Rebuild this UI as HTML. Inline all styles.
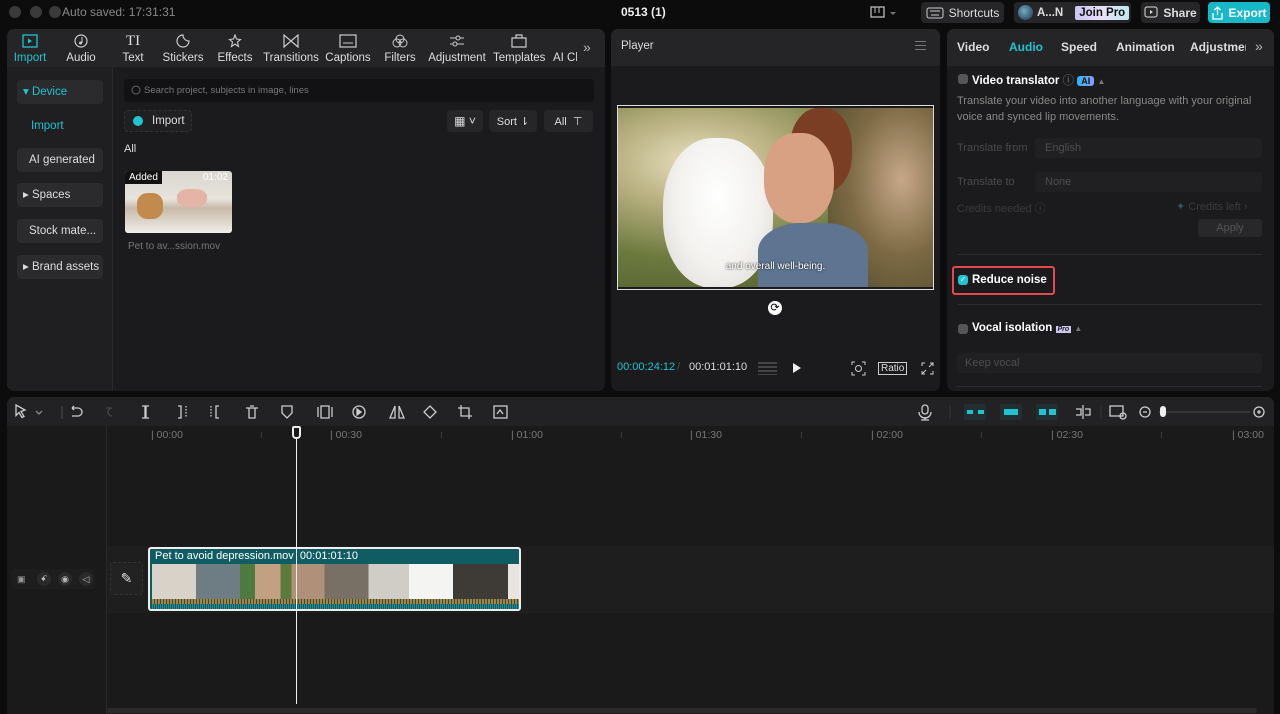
<!DOCTYPE html>
<html><head><meta charset="utf-8"><style>
*{box-sizing:border-box;margin:0;padding:0}
body{width:1280px;height:714px;background:#0c0c0c;font-family:"Liberation Sans",sans-serif;color:#ddd;position:relative;overflow:hidden;font-size:12px}
.a{position:absolute}
.panel{position:absolute;background:#1d1d1f;border-radius:7px;overflow:hidden}
.dot{width:12px;height:12px;border-radius:50%;background:#3a3a3a;top:6px}
.btn{position:absolute;background:#262628;border-radius:4px;color:#ddd;font-size:12px;display:flex;align-items:center;justify-content:center;white-space:nowrap}
.tab{position:absolute;top:5px;text-align:center;font-size:11.5px;color:#ddd;white-space:nowrap}
.tab svg{display:block;margin:0 auto 4px}
.side{position:absolute;left:10px;width:86px;height:24px;border-radius:4px;background:#2b2b2d;font-size:11.5px;color:#ddd;padding-left:6px;line-height:24px;white-space:nowrap;overflow:hidden}
.rt{position:absolute;font-size:10.5px;color:#777}
</style></head><body>
<div class="a dot" style="left:9px"></div><div class="a dot" style="left:30px"></div><div class="a dot" style="left:49px"></div>
<div class="a" style="left:62px;top:5px;color:#888;font-size:12px">Auto saved: 17:31:31</div>
<div class="a" style="left:621px;top:5px;color:#eee;font-size:12px;font-weight:bold">0513 (1)</div>
<svg class="a" style="left:870px;top:6px" width="28" height="14"><rect x="1" y="1" width="13" height="10" fill="none" stroke="#bbb" stroke-width="1.3"/><path d="M5 1v6M9 1v6" stroke="#bbb"/><path d="M20 6l3 3 3-3" fill="#777"/></svg>
<div class="btn" style="left:921px;top:2px;width:83px;height:21px;gap:5px"><svg width="18" height="12"><rect x="1" y="1" width="16" height="10" rx="2" fill="none" stroke="#ccc"/><path d="M4 4h10M5 8h8" stroke="#ccc"/></svg>Shortcuts</div>
<div class="btn" style="left:1014px;top:2px;width:117px;height:21px;justify-content:flex-start;padding-left:4px;gap:4px"><div style="width:15px;height:15px;border-radius:50%;background:radial-gradient(circle at 40% 40%,#7ab 0,#357 70%)"></div><b style="font-size:11.5px">A...N</b><span style="margin-left:8px;background:linear-gradient(90deg,#c9c4f4,#e9e1f6,#bfe9ee);color:#111;font-weight:bold;padding:1px 4px;border-radius:2px;font-size:11.5px">Join Pro</span></div>
<div class="btn" style="left:1141px;top:2px;width:59px;height:21px;gap:4px;font-weight:bold"><svg width="15" height="13"><rect x="1" y="1" width="12" height="10" rx="2" fill="none" stroke="#ddd"/><path d="M6 4l3 2-3 2z" fill="#ddd"/></svg>Share</div>
<div class="btn" style="left:1208px;top:2px;width:62px;height:21px;gap:4px;background:#17b8c8;color:#fff;font-weight:bold"><svg width="13" height="14"><path d="M6.5 1v8M3.5 4l3-3 3 3M2 7v6h9V7" fill="none" stroke="#fff" stroke-width="1.3"/></svg>Export</div>

<div class="panel" style="left:7px;top:29px;width:598px;height:362px;background:#1b1b1d">
 <div class="a" style="left:0;top:0;width:598px;height:38px;background:#252527"></div>
 <div class="a" style="left:0;top:38px;width:106px;height:324px;background:#1f1f21;border-right:1px solid #2a2a2a"></div>
 <div class="tab" style="left:5px;width:36px;color:#1fc3d2"><svg width="16" height="14"><rect x="1" y="1" width="14" height="12" fill="none" stroke="#1fc3d2" stroke-width="1.3"/><path d="M6 4.5l4 2.5-4 2.5z" fill="#1fc3d2"/></svg>Import</div>
 <div class="tab" style="left:58px;width:32px"><svg width="14" height="14"><circle cx="7" cy="7" r="6" fill="none" stroke="#ccc" stroke-width="1.2"/><path d="M8 3v6" stroke="#ccc"/><circle cx="6.5" cy="9" r="1.5" fill="#ccc"/></svg>Audio</div>
 <div class="tab" style="left:112px;width:28px"><div style="font-family:'Liberation Serif',serif;font-size:15px;line-height:14px;margin-bottom:4px">TI</div>Text</div>
 <div class="tab" style="left:154px;width:44px"><svg width="14" height="14"><path d="M7 1a6 6 0 1 0 6 6 6 6 0 0 1-6-6z" fill="none" stroke="#ccc" stroke-width="1.2"/></svg>Stickers</div>
 <div class="tab" style="left:208px;width:40px"><svg width="14" height="14"><path d="M7 1l1.5 4 4 .5-3 2.5 1 4.5L7 10l-3.5 2.5 1-4.5-3-2.5 4-.5z" fill="none" stroke="#ccc" stroke-width="1.1"/></svg>Effects</div>
 <div class="tab" style="left:256px;width:56px"><svg width="16" height="14"><path d="M1 1v12l14-12v12z" fill="none" stroke="#ccc" stroke-width="1.2"/></svg>Transitions</div>
 <div class="tab" style="left:318px;width:46px"><svg width="18" height="14"><rect x="1" y="1" width="16" height="12" fill="none" stroke="#ccc" stroke-width="1.2"/><path d="M4 9h10" stroke="#ccc"/></svg>Captions</div>
 <div class="tab" style="left:376px;width:34px"><svg width="16" height="14"><circle cx="8" cy="5" r="4" fill="none" stroke="#ccc"/><circle cx="5" cy="9" r="4" fill="none" stroke="#ccc"/><circle cx="11" cy="9" r="4" fill="none" stroke="#ccc"/></svg>Filters</div>
 <div class="tab" style="left:421px;width:58px"><svg width="16" height="14"><path d="M1 4h14M1 10h14" stroke="#ccc"/><circle cx="9" cy="4" r="2" fill="#252527" stroke="#ccc"/><circle cx="6" cy="10" r="2" fill="#252527" stroke="#ccc"/></svg>Adjustment</div>
 <div class="tab" style="left:486px;width:52px"><svg width="16" height="14"><path d="M1 4h14v9H1z M5 4V1h6v3" fill="none" stroke="#ccc" stroke-width="1.2"/></svg>Templates</div>
 <div class="tab" style="left:546px;width:24px;overflow:hidden;text-align:left"><div style="height:18px"></div>AI Cl</div>
 <div class="a" style="left:576px;top:10px;color:#bbb;font-size:14px">»</div>
 <div class="side" style="top:51px;color:#1fc3d2">▾ Device</div>
 <div class="a" style="left:24px;top:91px;color:#1fc3d2;font-size:11.5px">Import</div>
 <div class="side" style="top:119px;padding-left:12px">AI generated</div>
 <div class="side" style="top:154px">▸ Spaces</div>
 <div class="side" style="top:190px;padding-left:12px">Stock mate...</div>
 <div class="side" style="top:226px">▸ Brand assets</div>
 <div class="a" style="left:117px;top:50px;width:470px;height:23px;background:#121214;border-radius:4px;color:#777;font-size:9.5px;line-height:23px;padding-left:20px">Search project, subjects in image, lines</div>
 <svg class="a" style="left:124px;top:56px" width="11" height="11"><circle cx="5" cy="5" r="4" fill="none" stroke="#666"/></svg>
 <div class="a" style="left:117px;top:81px;width:68px;height:22px;border:1px dashed #333;border-radius:4px;background:#202022;line-height:20px;padding-left:27px;font-size:11.5px">Import</div>
 <div class="a" style="left:126px;top:87px;width:10px;height:10px;border-radius:50%;background:#1fc3d2"></div>
 <div class="btn" style="left:440px;top:81px;width:36px;height:22px">▦ ˅</div>
 <div class="btn" style="left:482px;top:81px;width:48px;height:22px;font-size:11px">Sort ⇂</div>
 <div class="btn" style="left:537px;top:81px;width:49px;height:22px;font-size:11px">All &nbsp;⊤</div>
 <div class="a" style="left:117px;top:114px;font-size:11px">All</div>
 <div class="a" style="left:118px;top:142px;width:107px;height:62px;border-radius:3px;background:linear-gradient(180deg,#d8d6d0 0%,#e8e4dc 45%,#c7b9a8 60%,#f0eeea 100%);overflow:hidden">
  <div class="a" style="left:12px;top:22px;width:26px;height:26px;background:#c38a4e;border-radius:40%"></div>
  <div class="a" style="left:52px;top:18px;width:30px;height:18px;background:#e4b4a6;border-radius:40%"></div>
  <div class="a" style="left:0;top:0;background:#111;color:#fff;font-size:10px;padding:1px 4px">Added</div>
  <div class="a" style="right:4px;top:1px;color:#fff;font-size:10px">01:02</div>
 </div>
 <div class="a" style="left:121px;top:212px;color:#777;font-size:10px">Pet to av...ssion.mov</div>
</div>

<div class="panel" style="left:611px;top:29px;width:329px;height:362px;background:#1b1b1d">
 <div class="a" style="left:0;top:0;width:329px;height:37px;background:#252527"></div>
 <div class="a" style="left:10px;top:11px;font-size:11.5px">Player</div>
 <div class="a" style="left:304px;top:12px;width:11px;height:9px;border-top:1px solid #777;border-bottom:1px solid #777"><div style="margin-top:3px;border-top:1px solid #777"></div></div>
 <div class="a" style="left:7px;top:79px;width:315px;height:179px;overflow:hidden;background:radial-gradient(ellipse at 25% 30%,#e8e0c0 0,#b8b080 25%,#6d7a3e 55%,#44522a 100%)">
  <div class="a" style="left:210px;top:0;width:105px;height:179px;background:radial-gradient(ellipse at 70% 40%,#c7a888 0,#7d6a45 50%,#4c4a2a 100%)"></div>
  <div class="a" style="left:45px;top:30px;width:110px;height:150px;border-radius:45%;background:radial-gradient(ellipse at 50% 40%,#fff 0,#f2f1ee 55%,#d8d6d0 100%)"></div>
  <div class="a" style="left:172px;top:0;width:62px;height:85px;border-radius:45%;background:#7a3e24"></div>
  <div class="a" style="left:146px;top:25px;width:70px;height:90px;border-radius:45%;background:#d9a183"></div>
  <div class="a" style="left:140px;top:115px;width:110px;height:70px;border-radius:40% 40% 0 0;background:#5e7491"></div>
  <div class="a" style="left:0;top:153px;width:315px;text-align:center;color:#fff;font-size:10px;text-shadow:0 0 2px #000">and overall well-being.</div>
 </div>
 <div class="a" style="left:6px;top:76px;width:317px;height:185px;border:1px solid #ddd"></div>
 <div class="a" style="left:157px;top:272px;width:14px;height:14px;border-radius:50%;background:#fff;color:#000;font-size:11px;text-align:center;line-height:14px">⟳</div>
 <div class="a" style="left:6px;top:332px;color:#1fc3d2;font-size:11px">00:00:24:12</div>
 <div class="a" style="left:66px;top:332px;color:#555;font-size:11px">/</div>
 <div class="a" style="left:78px;top:332px;color:#ddd;font-size:11px">00:01:01:10</div>
 <div class="a" style="left:147px;top:333px;width:19px;height:13px;background:repeating-linear-gradient(180deg,#444 0 2px,transparent 2px 4px)"></div>
 <svg class="a" style="left:181px;top:333px" width="10" height="12"><path d="M1 1l8 5-8 5z" fill="#eee"/></svg>
 <svg class="a" style="left:240px;top:332px" width="15" height="15"><path d="M1 4V1h3M11 1h3v3M14 11v3h-3M4 14H1v-3" fill="none" stroke="#ccc"/><circle cx="7.5" cy="7.5" r="3" fill="none" stroke="#ccc"/></svg>
 <div class="a" style="left:267px;top:333px;border:1px solid #ccc;font-size:10px;padding:0 2px;color:#ddd">Ratio</div>
 <svg class="a" style="left:310px;top:333px" width="13" height="13"><path d="M1 4V1h3M9 1h3v3M12 9v3H9M4 12H1V9M1 12l4-4M12 1L8 5" fill="none" stroke="#ccc"/></svg>
</div>

<div class="panel" style="left:947px;top:29px;width:327px;height:362px;background:#1b1b1d">
 <div class="a" style="left:0;top:0;width:327px;height:37px;background:#252527"></div>
 <div class="a" style="left:10px;top:11px;font-weight:bold">Video</div>
 <div class="a" style="left:62px;top:11px;font-weight:bold;color:#1fc3d2">Audio</div>
 <div class="a" style="left:114px;top:11px;font-weight:bold">Speed</div>
 <div class="a" style="left:169px;top:11px;font-weight:bold">Animation</div>
 <div class="a" style="left:243px;top:11px;font-weight:bold;width:56px;overflow:hidden;white-space:nowrap">Adjustment</div>
 <div class="a" style="left:308px;top:9px;color:#bbb;font-size:14px">»</div>
 <div class="a" style="left:11px;top:45px;width:10px;height:10px;border-radius:3px;background:#555"></div>
 <div class="a" style="left:25px;top:43px;font-weight:bold;font-size:11.5px;color:#fff;white-space:nowrap">Video translator <span style="color:#777;font-weight:normal">ⓘ</span> <span style="background:linear-gradient(90deg,#29b4f0,#8a9cf8);color:#111;font-size:9px;padding:0 4px;border-radius:3px">AI</span> <span style="color:#777;font-size:8px">▲</span></div>
 <div class="a" style="left:10px;top:65px;width:312px;color:#888;font-size:11px;line-height:15.5px">Translate your video into another language with your original voice and synced lip movements.</div>
 <div class="a" style="left:10px;top:113px;color:#4a4a4a;font-size:11px">Translate from</div>
 <div class="a" style="left:88px;top:109px;width:227px;height:20px;background:#202022;border-radius:3px;color:#4e4e4e;font-size:11px;padding:4px 10px">English</div>
 <div class="a" style="left:10px;top:147px;color:#4a4a4a;font-size:11px">Translate to</div>
 <div class="a" style="left:88px;top:143px;width:227px;height:20px;background:#202022;border-radius:3px;color:#4e4e4e;font-size:11px;padding:4px 10px">None</div>
 <div class="a" style="left:10px;top:171px;color:#3a3a3a;font-size:11px">Credits needed ⓘ</div>
 <div class="a" style="left:229px;top:171px;color:#3a3a3a;font-size:11px"><span style="color:#2a5a60">✦</span> Credits left ›</div>
 <div class="a" style="left:251px;top:190px;width:64px;height:18px;background:#28282a;border-radius:3px;color:#555;font-size:11px;text-align:center;line-height:18px">Apply</div>
 <div class="a" style="left:10px;top:225px;width:305px;border-top:1px solid #2c2c2c"></div>
 <div class="a" style="left:5px;top:237px;width:103px;height:29px;border:2px solid #e5484d;border-radius:3px"></div>
 <div class="a" style="left:11px;top:246px;width:10px;height:10px;border-radius:3px;background:#1fc3d2;color:#fff;font-size:8px;line-height:10px;text-align:center">✓</div>
 <div class="a" style="left:25px;top:245px;font-weight:bold;font-size:11.5px;color:#fff">Reduce noise</div>
 <div class="a" style="left:10px;top:275px;width:305px;border-top:1px solid #2c2c2c"></div>
 <div class="a" style="left:11px;top:295px;width:10px;height:10px;border-radius:3px;background:#555"></div>
 <div class="a" style="left:25px;top:293px;font-weight:bold;font-size:11.5px;color:#fff;white-space:nowrap">Vocal isolation <span style="background:#cfc6f5;color:#222;font-size:7px;padding:0 2px;font-style:italic">Pro</span> <span style="color:#777;font-size:8px">▲</span></div>
 <div class="a" style="left:10px;top:324px;width:305px;height:20px;background:#202022;border-radius:3px;color:#4e4e4e;font-size:11px;padding:4px 8px">Keep vocal</div>
 <div class="a" style="left:10px;top:357px;width:305px;border-top:1px solid #2c2c2c"></div>
</div>

<div class="panel" style="left:7px;top:397px;width:1267px;height:317px;background:#1a1a1a;border-radius:7px 7px 0 0">
 <div class="a" style="left:0;top:0;width:1267px;height:29px;background:#222224"></div>
 <div class="a" style="left:99px;top:29px;width:1px;height:288px;background:#2a2a2a"></div>
 <div class="a" style="left:100px;top:149px;width:1167px;height:67px;background:#1e1e1e"></div>
</div>
<svg class="a" style="left:12px;top:403px" width="640" height="18" fill="none" stroke="#ccc" stroke-width="1.3">
 <path d="M4 2l9 5-4 1.5 3 5-2 1-3-5-3 3z"/><path d="M24 8l3 3 3-3" stroke="#888"/>
 <path d="M50 3v13" stroke="#444"/>
 <path d="M60 5h6a4 4 0 0 1 0 8h-6M60 5l2-2M60 5l2 2"/>
 <path d="M94 5h6a4 4 0 0 0 0 8" stroke="#444"/>
 <path d="M130 3h3v12h-3M137 3h-3v12h3"/>
 <path d="M166 3h3v12h-3"/><path d="M174 3v12" stroke-dasharray="1.5 1.5"/>
 <path d="M199 3v12" stroke-dasharray="1.5 1.5"/><path d="M207 3h-3v12h3"/>
 <path d="M234 5h12M237 5v10h6V5M238 3h4"/>
 <path d="M270 3h10v7l-5 5-5-5z"/>
 <path d="M306 4v10M309 3h8v12h-8zM320 4v10"/>
 <circle cx="347" cy="9" r="6"/><path d="M345 6l4 3-4 3z" fill="#ccc"/>
 <path d="M383 3v12h-5zM387 3v12h5z"/>
 <path d="M418 3l6 6-6 6-6-6z"/>
 <path d="M449 2v11h11M446 5h11v11"/>
 <rect x="482" y="3" width="13" height="12"/><path d="M485 11l3-4 3 4"/>
</svg>
<svg class="a" style="left:918px;top:403px" width="350" height="18" fill="none" stroke="#ccc" stroke-width="1.3">
 <rect x="4" y="2" width="6" height="9" rx="3"/><path d="M1 9a6 6 0 0 0 12 0M7 14v3M3 17h8"/>
 <path d="M32 2v14" stroke="#333"/>
 <rect x="46" y="1" width="22" height="16" rx="2" fill="#232e30" stroke="none"/><path d="M49 7h6v4h-6zM60 7h6v4h-6z" fill="#1fc3d2" stroke="none"/>
 <rect x="82" y="1" width="22" height="16" rx="2" fill="#232e30" stroke="none"/><path d="M86 6h14v6H86z" fill="#1fc3d2" stroke="none"/>
 <rect x="118" y="1" width="22" height="16" rx="2" fill="#232e30" stroke="none"/><path d="M121 6h7v6h-7zM131 6h7v6h-7z" fill="#1fc3d2" stroke="none"/>
 <path d="M165 2v14M158 6h5v6h-5M167 6h5v6h-5"/>
 <path d="M183 2v14" stroke="#333"/>
 <rect x="192" y="3" width="13" height="10"/><circle cx="205" cy="13" r="3"/>
 <circle cx="227" cy="9" r="5"/><path d="M225 9h4"/>
 <path d="M240 9h92" stroke="#444"/><rect x="242" y="3" width="6" height="11" rx="3" fill="#eee" stroke="none"/>
 <circle cx="341" cy="9" r="5"/><path d="M339 9h4M341 7v4"/>
</svg>
<div class="a" style="left:106px;top:432px;width:1170px;height:6px;background:repeating-linear-gradient(90deg,transparent 0 65px,#3a3a3a 65px 66px,transparent 66px 90px)"></div>
<div class="rt" style="left:151px;top:429px;background:#1a1a1a;padding-right:4px">| 00:00</div>
<div class="rt" style="left:330px;top:429px;background:#1a1a1a;padding-right:4px">| 00:30</div>
<div class="rt" style="left:511px;top:429px;background:#1a1a1a;padding-right:4px">| 01:00</div>
<div class="rt" style="left:690px;top:429px;background:#1a1a1a;padding-right:4px">| 01:30</div>
<div class="rt" style="left:871px;top:429px;background:#1a1a1a;padding-right:4px">| 02:00</div>
<div class="rt" style="left:1051px;top:429px;background:#1a1a1a;padding-right:4px">| 02:30</div>
<div class="rt" style="left:1232px;top:429px;background:#1a1a1a;padding-right:4px">| 03:00</div>
<div class="a" style="left:11px;top:569px;width:84px;height:20px;background:#1e1e1e;border-radius:4px"></div>
<div class="a" style="left:17px;top:574px;font-size:9px;color:#999">▣</div>
<div class="a" style="left:37px;top:572px;width:14px;height:14px;border-radius:50%;background:#2a2a2a;font-size:8px;color:#bbb;text-align:center;line-height:14px">ꗃ</div>
<div class="a" style="left:58px;top:572px;width:14px;height:14px;border-radius:50%;background:#2a2a2a;font-size:9px;color:#bbb;text-align:center;line-height:14px">◉</div>
<div class="a" style="left:79px;top:572px;width:14px;height:14px;border-radius:50%;background:#2a2a2a;font-size:9px;color:#bbb;text-align:center;line-height:14px">◁</div>
<div class="a" style="left:110px;top:562px;width:33px;height:33px;border:1px dashed #333;border-radius:3px;background:#222;color:#ddd;font-size:14px;text-align:center;line-height:31px">✎</div>
<div class="a" style="left:148px;top:547px;width:373px;height:64px;border:2px solid #eee;border-radius:3px;background:#0f5d62;overflow:hidden">
 <div class="a" style="left:5px;top:1px;color:#fff;font-size:11px;white-space:nowrap">Pet to avoid depression.mov &nbsp;00:01:01:10</div>
 <div class="a" style="left:2px;top:15px;width:367px;height:35px;background:linear-gradient(90deg,#d8d2c8 0 12%,#6e7c84 12% 24%,#4d7a3e 24% 28%,#c2a183 28% 35%,#5a7a3e 35% 38%,#b09078 38% 47%,#797065 47% 59%,#d0ccc6 59% 70%,#f4f4f2 70% 82%,#3e3a36 82% 97%,#e8e4e0 97%)"></div>
 <div class="a" style="left:2px;top:50px;width:367px;height:5px;background:repeating-linear-gradient(90deg,#b87e35 0 2px,#0f5d62 2px 3px)"></div>
 <div class="a" style="left:2px;top:55px;width:367px;height:6px;background:repeating-linear-gradient(90deg,#2a8a8e 0 1px,#0f5d62 1px 2px)"></div>
</div>
<div class="a" style="left:296px;top:438px;width:1px;height:266px;background:#eee"></div>
<div class="a" style="left:292px;top:426px;width:9px;height:13px;border:2px solid #eee;border-radius:2px 2px 4px 4px;background:#1a1a1a"></div>
<div class="a" style="left:107px;top:708px;width:1150px;height:5px;background:#2a2a2a;border-radius:3px"></div>
</body></html>
